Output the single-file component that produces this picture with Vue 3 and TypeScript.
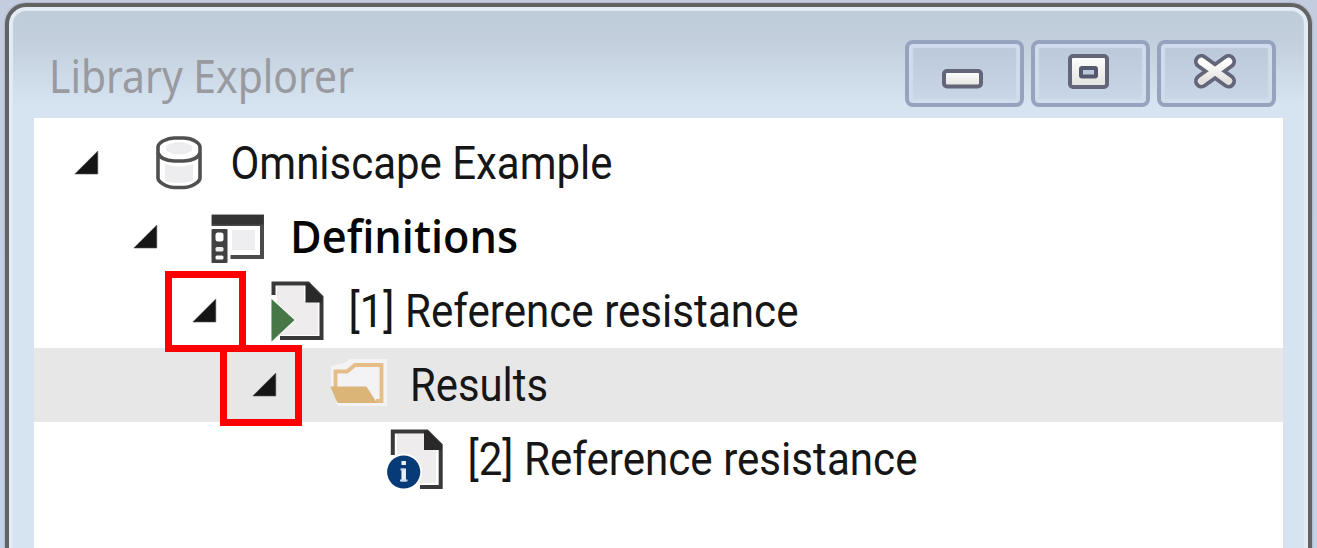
<script setup lang="ts">
type IconName = 'database' | 'definitions' | 'run' | 'folder' | 'info'

interface TreeRow {
  label: string
  icon: IconName
  depth: number
  width: number
  offset: number
  expanded?: boolean
  selected?: boolean
  bold?: boolean
}

const rows: TreeRow[] = [
  { label: 'Omniscape Example', icon: 'database', depth: 0, width: 382, offset: -0.5, expanded: true },
  { label: 'Definitions', icon: 'definitions', depth: 1, width: 228, offset: 0, expanded: true, bold: true },
  { label: '[1] Reference resistance', icon: 'run', depth: 2, width: 450, offset: -1.5, expanded: true },
  { label: 'Results', icon: 'folder', depth: 3, width: 138, offset: 1, expanded: true, selected: true },
  { label: '[2] Reference resistance', icon: 'info', depth: 4, width: 450, offset: -1.5 },
]

const indent = (depth: number) => ({ paddingLeft: `${39.5 + depth * 59.4}px` })
</script>

<template>
  <div class="desktop">
    <div class="window">
      <header class="titlebar">
        <svg class="title" width="330" height="70">
          <text x="-1" y="47" textLength="305" lengthAdjust="spacingAndGlyphs">Library Explorer</text>
        </svg>
        <div class="controls">
          <button class="control" aria-label="Minimize">
            <svg width="119" height="67">
              <defs>
                <linearGradient id="face" x1="0" y1="0" x2="0" y2="1">
                  <stop offset="0" stop-color="#fff" />
                  <stop offset="1" stop-color="#e2e1df" />
                </linearGradient>
              </defs>
              <rect x="39" y="31" width="37" height="15.5" rx="3" fill="url(#face)" stroke="#636579" stroke-width="4" />
            </svg>
          </button>
          <button class="control" aria-label="Maximize">
            <svg width="119" height="67">
              <rect x="39" y="16" width="37" height="31" rx="3" fill="url(#face)" stroke="#636579" stroke-width="4" />
              <rect x="50" y="28" width="15" height="8.5" rx="1" fill="#b9c8db" stroke="#55586f" stroke-width="4" />
            </svg>
          </button>
          <button class="control" aria-label="Close">
            <svg width="119" height="67" fill="none" stroke-linecap="round">
              <path d="M44.5 21.5L71.5 41M71.5 21.5L44.5 41" stroke="#636579" stroke-width="15" />
              <path d="M44.5 21.5L71.5 41M71.5 21.5L44.5 41" stroke="url(#face)" stroke-width="7.5" />
            </svg>
          </button>
        </div>
      </header>

      <main class="tree">
        <div v-for="row in rows" :key="row.label" class="row" :class="{ selected: row.selected }" :style="indent(row.depth)">
          <svg class="arrow" width="26" height="74">
            <path v-if="row.expanded" d="M23.8 25V48H.8Z" fill="#151515" stroke="#555" stroke-width=".6" />
          </svg>
          <svg class="icon" width="60" height="74">
            <g v-if="row.icon === 'database'" stroke="#505050" stroke-width="3.6">
              <path d="M8 21Q8 18 13 15Q19 12 24 12H34Q40 12 45 15Q50 18 50 21V52Q50 55 45 58Q39 61.5 34 61.5H24Q19 61.5 13 58Q8 55 8 52Z" fill="#fff" />
              <path d="M16 20Q29 12 42 20V25Q29 32 16 25ZM15 38Q29 43 43 38V55Q29 59 15 55Z" fill="#ededf0" stroke="none" />
              <path d="M8 27Q11 34.5 24 35H34Q47 34.5 50 27" fill="none" />
            </g>
            <g v-else-if="row.icon === 'definitions'">
              <rect x="23" y="30" width="23" height="20" fill="#eeeef1" />
              <path d="M2.5 14.5H55V59H21.5V55H51V26H2.5Z" fill="#4b4b4b" />
              <rect x="3" y="15" width="51.5" height="9.5" fill="#343434" />
              <rect x="2.5" y="29" width="16" height="34" rx="1" fill="#414141" />
              <rect x="6.5" y="32.5" width="8" height="9" rx="2.5" fill="#fff" />
              <rect x="6.5" y="47" width="8" height="4.5" rx="1.5" fill="#eee" />
              <rect x="6.5" y="55.5" width="8" height="4" rx="1.5" fill="#fff" />
            </g>
            <g v-else-if="row.icon === 'run'">
              <path d="M8 12H35V27H49V61H8Z" fill="#eeeced" />
              <path d="M4.5 21V9.5H39L52.5 23V64H11" fill="none" stroke="#393939" stroke-width="4" />
              <path d="M36.5 9H40L53 23V28.5H36.5Z" fill="#292929" />
              <path d="M2.5 25L25.5 46L2.5 67.5Z" fill="#477647" stroke="#f7faf7" stroke-width="2" paint-order="stroke" />
            </g>
            <g v-else-if="row.icon === 'folder'">
              <path d="M3 38V18L16 15L22 11H59V58H10Z" fill="#f3f3f6" />
              <path d="M7.5 41V23.5H19L27 17H53.5V53H48" fill="none" stroke="#e4be86" stroke-width="3.8" />
              <path d="M2.5 38.5H38.5L49 55H10L8 52Z" fill="#dbb478" />
            </g>
            <g v-else>
              <path d="M9 12H36V27H48V61H9Z" fill="#eeeced" />
              <path d="M4.8 33V9.5H39L52.7 23V65H32" fill="none" stroke="#393939" stroke-width="4" />
              <path d="M36 9H40L53.5 23V28H36Z" fill="#292929" />
              <circle cx="15.7" cy="50" r="18.5" fill="#fff" />
              <circle cx="15.7" cy="50" r="16.6" fill="#063b78" />
              <path d="M15.7 39V43M15.7 46.5V59.5" stroke="#e8eff7" stroke-width="4.5" />
              <path d="M12.5 47.5H16M12 58.5H19.5" stroke="#c9d7e7" stroke-width="2" />
            </g>
          </svg>
          <svg class="label" :class="{ bold: row.bold }" :width="row.width + 12" height="74">
            <text :x="row.offset" y="52.5" :textLength="row.width" lengthAdjust="spacingAndGlyphs">{{ row.label }}</text>
          </svg>
        </div>
        <span class="marker marker-definition"></span>
        <span class="marker marker-results"></span>
      </main>
    </div>
  </div>
</template>

<style>
body {
  margin: 0;
  overflow: hidden;
}
</style>

<style scoped>
.desktop {
  box-sizing: border-box;
  width: 1317px;
  height: 548px;
  padding: 3px 5px 0;
  overflow: hidden;
  background: linear-gradient(#c4cde0, #c5d3e8);
}

.window {
  box-sizing: border-box;
  height: 580px;
  padding: 0 22px;
  border: 4px solid #636363;
  border-radius: 21px 21px 0 0;
  background: linear-gradient(#becbd8 0, #c3cfdc 35px, #d6e3f0 98px, #d6e3f0 100%);
  box-shadow: inset 0 0 1px 4px #e3ecf6, 0 0 2px #858994;
}

.titlebar {
  display: flex;
  justify-content: space-between;
  height: 111px;
  padding: 0 10px 0 19px;
}

.title {
  margin-top: 39px;
  overflow: visible;
}

.title text {
  font: 45px "Noto Sans", "Open Sans", sans-serif;
  fill: #999a9f;
}

.controls {
  display: flex;
  gap: 7px;
  margin-top: 33px;
}

.control {
  box-sizing: border-box;
  width: 119px;
  height: 67px;
  padding: 0;
  border: 4px solid #96a3be;
  border-radius: 8px;
  background: linear-gradient(#bac8da, #cad7e8);
  box-shadow: inset 0 0 1px 4px #d0dceb;
}

.control svg {
  display: block;
  margin: -4px;
}

.tree {
  position: relative;
  height: 450px;
  margin: 0 3px;
  padding-top: 8px;
  background: #fff;
}

.row {
  box-sizing: border-box;
  display: flex;
  height: 74px;
}

.selected {
  background: #e7e7e7;
}

.arrow {
  flex: none;
  margin-right: 50.5px;
}

.icon {
  flex: none;
  margin-right: 21px;
  overflow: visible;
}

.label {
  flex: none;
  overflow: visible;
}

.label text {
  font: 47px Roboto, "Liberation Sans", sans-serif;
  fill: #161616;
}

.label.bold text {
  font: 600 45px "Open Sans", "Noto Sans", sans-serif;
  fill: #060606;
}

.marker {
  position: absolute;
  box-sizing: border-box;
  width: 81px;
  height: 81px;
  border: 7px solid #f00;
}

.marker-definition {
  top: 153px;
  left: 131px;
}

.marker-results {
  top: 227px;
  left: 186px;
  width: 82px;
}
</style>
